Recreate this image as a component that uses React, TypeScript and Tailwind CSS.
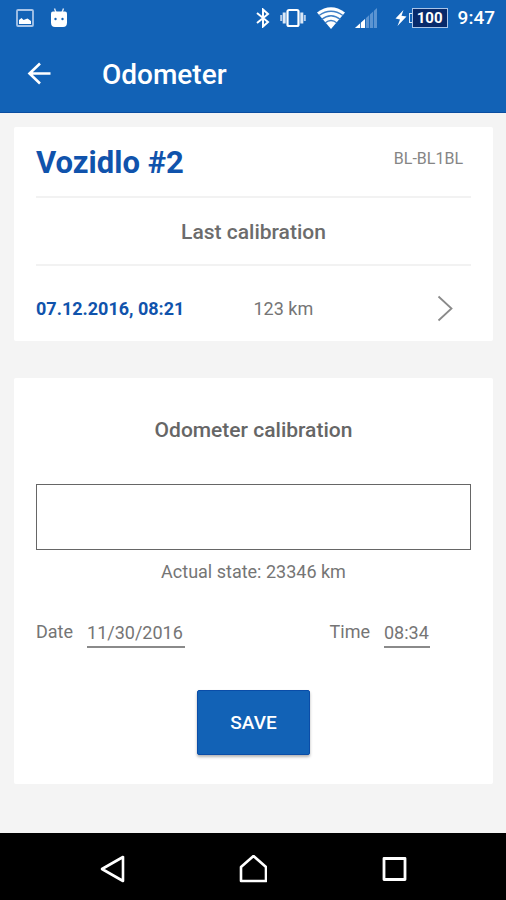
import React, { useState } from 'react';

const StatusBar: React.FC = () => (
  <div className="flex h-9 items-center justify-between pl-4 pr-[11px] text-white">
    <div className="flex items-center gap-4">
      <svg className="h-[18px] w-[18px]" viewBox="0 0 18 18" fill="none">
        <rect x="1" y="1" width="16" height="16" rx="1" stroke="#a9c5e8" strokeWidth="1.8" />
        <path d="M3 15v-4l2.500-2 2 2 4-1.500 3.500 2.500v3z" fill="#fff" />
      </svg>
      <svg className="h-5 w-[18px]" viewBox="0 0 18 20">
        <path d="M4.500 0.500l1.500 4M13.500 0.500L12 4.500" stroke="#dbe8f7" strokeWidth="1.4" />
        <path d="M1 5.500q0-2 2-2h12q2 0 2 2v9q0 4.500-4 4.500H5q-4 0-4-4.500z" fill="#fff" />
        <circle cx="5.500" cy="11" r="1.200" fill="#1262b6" />
        <circle cx="12.500" cy="11" r="1.200" fill="#1262b6" />
      </svg>
    </div>
    <div className="flex items-center">
      <svg className="h-5 w-3.5" viewBox="0 0 14 20" fill="none" stroke="#fff" strokeWidth="2">
        <path d="M1 5L12 14L7 18.500V1.500L12 6L1 15" />
      </svg>
      <svg className="ml-2.5 h-5 w-[26px]" viewBox="0 0 26 20">
        <rect x="7.500" y="2" width="11" height="16" rx="1.500" fill="none" stroke="#fff" strokeWidth="2.200" />
        <path d="M4.200 4.500v11M21.800 4.500v11" stroke="#dbe8f7" strokeWidth="3" />
        <path d="M1.200 7v6M24.800 7v6" stroke="#b5cdea" strokeWidth="2" />
      </svg>
      <svg className="ml-[11px] h-[22px] w-7" viewBox="0 0 28 22">
        <path d="M0 5.500Q14-5 28 5.500L14 22z" fill="#fff" />
        <g fill="none" stroke="#3f7fc6" strokeWidth="1.300">
          <path d="M2 8.500Q14 0 26 8.500" />
          <path d="M4.500 12.500Q14 5 23.500 12.500" />
          <path d="M8 16Q14 11 20 16" />
        </g>
      </svg>
      <svg className="ml-2.5 h-5 w-[22px]" viewBox="0 0 22 20">
        <path d="M0 20L22 0V20z" fill="#5b94d2" />
        <path d="M0 20L10 11V20z" fill="#fff" />
        <path d="M5.500 12v8M10.500 7v13M14.500 4v16M18.500 1v19" stroke="#1262b6" strokeWidth="0.800" />
      </svg>
      <svg className="ml-[18px] h-[18px] w-3" viewBox="0 0 12 18">
        <path d="M8.500 1L0.500 9.500L5 10.500L2.500 17L11.500 7.500L6.500 6.800z" fill="#fff" />
      </svg>
      <div className="ml-0.5 flex items-center">
        <span className="h-2.5 w-[3px] border border-r-0 border-[#dbe8f7]" />
        <span className="flex h-5 w-9 items-center justify-center border border-[#a9c5e8] bg-[#082a6b] text-[15px] font-bold leading-none">
          100
        </span>
      </div>
      <span className="ml-2.5 text-[19px] font-medium leading-6">9:47</span>
    </div>
  </div>
);

const NavBar: React.FC = () => (
  <nav className="grid h-[67px] grid-cols-3 items-center justify-items-center bg-black px-10 pt-1 text-white">
    <button type="button" aria-label="Back">
      <svg className="h-7 w-7" viewBox="0 0 28 28" fill="none" stroke="currentColor" strokeWidth="2.600" strokeLinejoin="round">
        <path d="M26 2V26L5 14z" />
      </svg>
    </button>
    <button type="button" aria-label="Home">
      <svg className="h-7 w-7" viewBox="0 0 28 28" fill="none" stroke="currentColor" strokeWidth="2.600" strokeLinejoin="round">
        <path d="M14.500 1L27 12V26H2V12z" />
      </svg>
    </button>
    <button type="button" aria-label="Recent apps">
      <svg className="h-7 w-7" viewBox="0 0 28 28" fill="none" stroke="currentColor" strokeWidth="2.800" strokeLinejoin="round">
        <rect x="3" y="3.500" width="21" height="21" />
      </svg>
    </button>
  </nav>
);

const App: React.FC = () => {
  const [odometer, setOdometer] = useState('');
  const [date, setDate] = useState('11/30/2016');
  const [time, setTime] = useState('08:34');

  return (
    <div className="flex min-h-screen flex-col bg-[#f4f4f4] font-['Roboto',sans-serif] text-[#757575]">
      <header className="border-b border-[#0a4da0] bg-[#1262b6] text-white">
        <StatusBar />
        <div className="flex h-[76px] items-center px-[27px]">
          <button type="button" aria-label="Go back">
            <svg className="h-6 w-6" viewBox="0 0 24 24" fill="none" stroke="currentColor" strokeWidth="2.600">
              <path d="M23.500 11.500H2.500M13 1.500L2.500 11.500L13 21.500" />
            </svg>
          </button>
          <h1 className="ml-[51px] pt-0.5 text-[28px] font-medium leading-8">Odometer</h1>
        </div>
      </header>

      <main className="flex grow flex-col gap-[37px] pb-12 pl-3.5 pr-[13px] pt-3.5">
        <section className="rounded-xs bg-white px-[22px]">
          <div className="flex h-[71px] items-start justify-between border-b-2 border-[#f2f2f2] pr-2 pt-4">
            <h2 className="text-[31px] font-bold leading-10 text-[#1053ac]">Vozidlo #2</h2>
            <span className="pt-1 text-base leading-6 text-[#858585]">BL-BL1BL</span>
          </div>
          <h3 className="flex h-[68px] items-center justify-center border-b-2 border-[#f2f2f2] pt-0.5 text-[21px] font-medium leading-6 text-[#6c6c6c]">
            Last calibration
          </h3>
          <a href="#calibration" className="grid h-[75px] grid-cols-2 items-center pt-2.5 text-lg leading-6">
            <span className="font-bold text-[#1053ac]">07.12.2016, 08:21</span>
            <span className="flex items-center justify-between pr-[18px]">
              123 km
              <svg className="h-7 w-4" viewBox="0 0 16 28" fill="none" stroke="#8a8a8a" strokeWidth="1.800">
                <path d="M1.500 1.500L14.500 13.500L1.500 25.500" />
              </svg>
            </span>
          </a>
        </section>

        <form
          className="flex flex-col rounded-xs bg-white px-[22px] pb-[29px] pt-10"
          onSubmit={(e) => e.preventDefault()}
        >
          <label htmlFor="odometer" className="text-center text-[21px] font-medium leading-6 text-[#666666]">
            Odometer calibration
          </label>
          <input
            id="odometer"
            type="text"
            inputMode="numeric"
            value={odometer}
            onChange={(e) => setOdometer(e.target.value)}
            className="mt-[42px] h-[66px] w-full border border-[#666666] bg-white px-4 text-2xl outline-none"
          />
          <p className="mt-2.5 text-center text-lg leading-6">Actual state: 23346 km</p>

          <div className="mt-9 flex justify-between pr-[41px] text-lg leading-6">
            <div className="flex items-start gap-3.5">
              <label htmlFor="date">Date</label>
              <input
                id="date"
                type="text"
                value={date}
                onChange={(e) => setDate(e.target.value)}
                className="h-7 w-[98px] border-b-2 border-[#8a8a8a] pb-0.5 leading-6 outline-none"
              />
            </div>
            <div className="flex items-start gap-3.5">
              <label htmlFor="time">Time</label>
              <input
                id="time"
                type="text"
                value={time}
                onChange={(e) => setTime(e.target.value)}
                className="h-7 w-[46px] border-b-2 border-[#8a8a8a] pb-0.5 leading-6 outline-none"
              />
            </div>
          </div>

          <button
            type="submit"
            className="mt-[42px] h-[65px] w-[113px] self-center rounded-xs border border-[#0a4da8] bg-[#1262b6] pt-0.5 text-[19px] font-medium text-white shadow-[0_2px_3px_rgba(0,0,0,0.3)]"
          >
            SAVE
          </button>
        </form>
      </main>

      <NavBar />
    </div>
  );
};

export default App;
